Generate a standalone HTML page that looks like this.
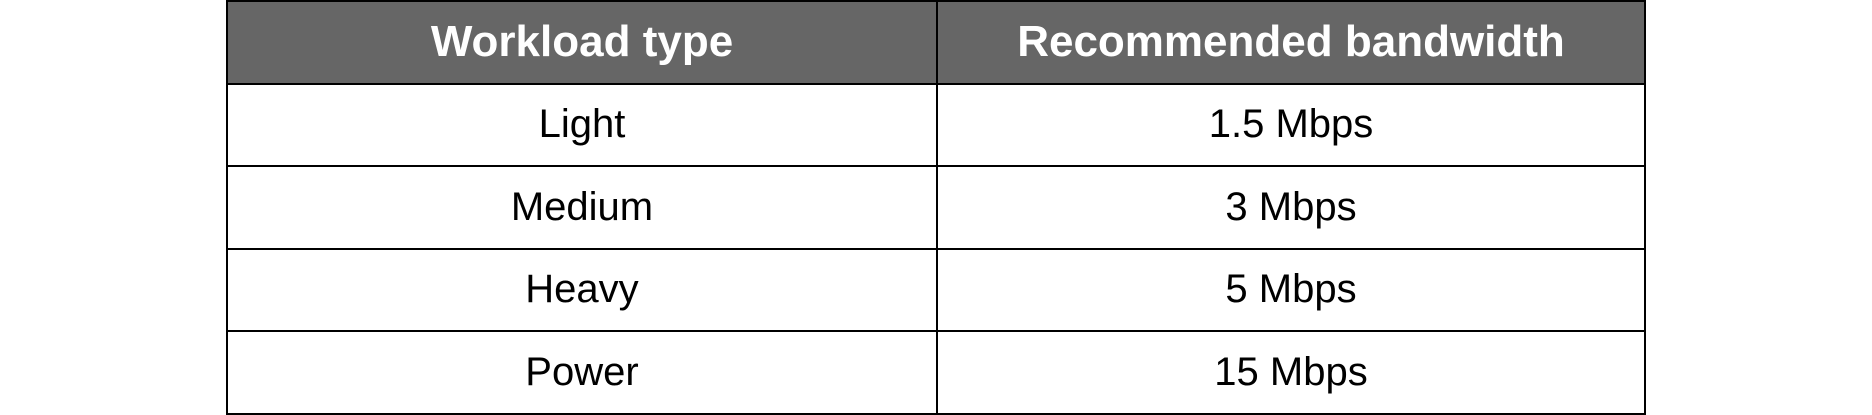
<!DOCTYPE html>
<html><head><style>
html,body{margin:0;padding:0;background:#fff;width:1872px;height:415px;overflow:hidden}
table{position:absolute;left:226px;top:0;width:1420px;border-collapse:collapse;font-family:"Liberation Sans",Arial,sans-serif;table-layout:fixed}
td,th{border:2.5px solid #000;text-align:center;padding:0;height:80.5px;font-size:40px;color:#000;font-weight:normal}
th{background:#666;color:#fff;font-weight:bold;font-size:44px;height:80.5px}
col.a{width:710px}
</style></head><body>
<table>
<colgroup><col class="a"><col></colgroup>
<tr><th>Workload type</th><th>Recommended bandwidth</th></tr>
<tr><td>Light</td><td>1.5 Mbps</td></tr>
<tr><td>Medium</td><td>3 Mbps</td></tr>
<tr><td>Heavy</td><td>5 Mbps</td></tr>
<tr><td>Power</td><td>15 Mbps</td></tr>
</table>
</body></html>
